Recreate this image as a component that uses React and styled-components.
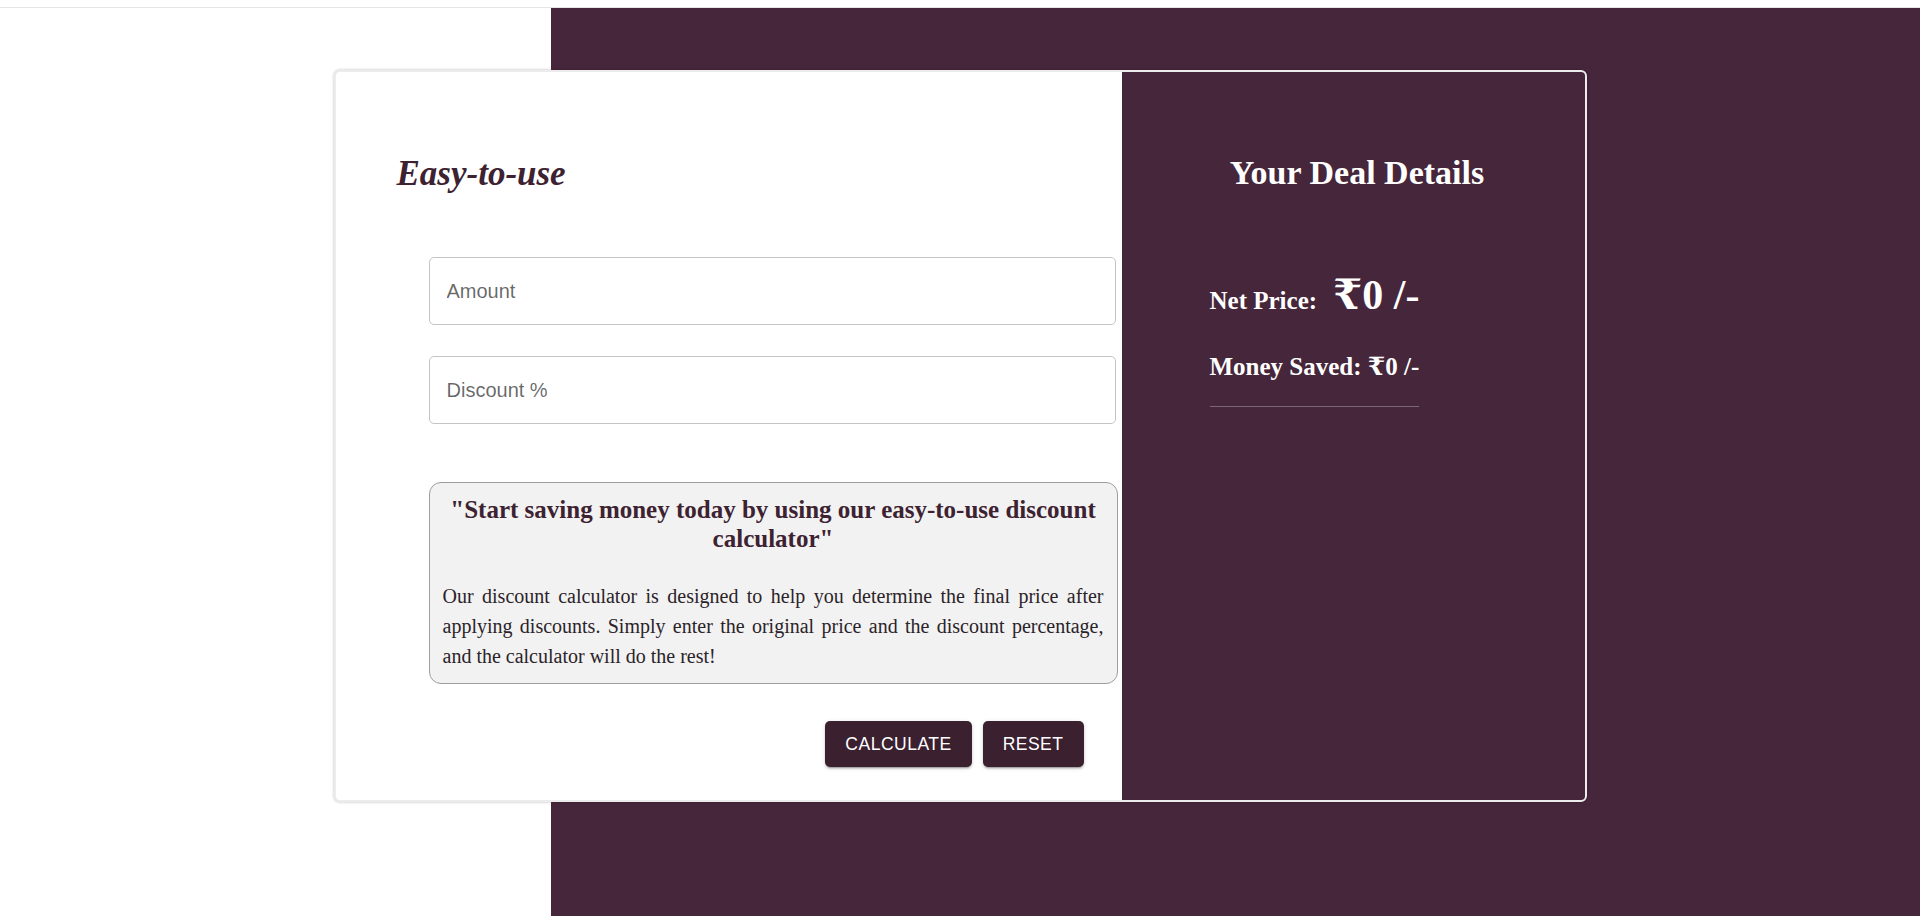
import React from "react";
import styled, { createGlobalStyle } from "styled-components";

const GlobalStyle = createGlobalStyle`
  html, body { margin: 0; padding: 0; }
  body {
    font-family: "Liberation Serif", "DejaVu Serif", serif;
    background: #ffffff;
  }
  * { box-sizing: border-box; }
`;

const PURPLE = "#46263a";
const DARK = "#3b2030";

const TopBar = styled.header`
  height: 8px;
  border-bottom: 1px solid #e4e4e4;
  background: #fff;
`;

const Stage = styled.main`
  min-height: calc(100vh - 8px);
  padding-top: 62px;
  background: linear-gradient(to right, #ffffff 0 551px, ${PURPLE} 551px 100%);
  display: flex;
  justify-content: center;
  align-items: flex-start;
`;

const Card = styled.section`
  width: 1253px;
  height: 732px;
  display: flex;
  background: #ffffff;
  border: 2px solid #ececec;
  border-radius: 6px;
  box-shadow: 0 0 3px rgba(0, 0, 0, 0.28);
  overflow: hidden;
`;

const FormPane = styled.div`
  width: 786px;
  padding: 83px 6px 0 61px;
  display: flex;
  flex-direction: column;
`;

const Title = styled.h2`
  margin: 0;
  font-size: ${(p) => p.$size || 34}px;
  font-weight: 700;
  font-style: ${(p) => (p.$italic ? "italic" : "normal")};
  color: ${(p) => (p.$light ? "#ffffff" : "#3d2231")};
  text-align: ${(p) => (p.$center ? "center" : "left")};
  line-height: 38px;
`;

const Form = styled.div`
  margin: 64px 0 0 32px;
  display: flex;
  flex-direction: column;
  gap: 31px;
`;

const Field = styled.input`
  display: block;
  width: 100%;
  height: 68px;
  padding: 0 17px;
  border: 1px solid #c4c4c4;
  border-radius: 5px;
  font-family: "Liberation Sans", Arial, sans-serif;
  font-size: 20px;
  color: #222;
  background: #fff;
  outline: none;
  &::placeholder {
    color: rgba(0, 0, 0, 0.6);
  }
`;

const QuoteBox = styled.div`
  margin: 58px 0 0 32px;
  width: 689px;
  padding: 0 13px 12px;
  border: 1px solid #9e9e9e;
  border-radius: 12px;
  background: #f2f2f2;
`;

const QuoteTitle = styled.h3`
  margin: 12px 0 0;
  font-size: 25px;
  line-height: 29px;
  font-weight: 700;
  text-align: center;
  color: #3d2231;
`;

const QuoteText = styled.p`
  margin: 28px 0 0;
  font-size: 20px;
  line-height: 30px;
  text-align: justify;
  color: #2b2329;
`;

const Actions = styled.div`
  margin: 37px 0 0 32px;
  padding-right: 32px;
  display: flex;
  justify-content: flex-end;
  gap: 11px;
`;

const Button = styled.button`
  height: 46px;
  padding: 0 20px;
  border: none;
  border-radius: 5px;
  background: ${DARK};
  color: #ffffff;
  font-family: "Liberation Sans", Arial, sans-serif;
  font-size: 17.5px;
  font-weight: 500;
  letter-spacing: 0.5px;
  text-transform: uppercase;
  cursor: pointer;
  box-shadow: 0px 3px 1px -2px rgba(0, 0, 0, 0.2),
    0px 2px 2px 0px rgba(0, 0, 0, 0.14), 0px 1px 5px 0px rgba(0, 0, 0, 0.12);
`;

const ResultPane = styled.aside`
  flex: 1;
  background: ${PURPLE};
  padding: 82px 0 0 8px;
  display: flex;
  flex-direction: column;
`;

const Details = styled.div`
  align-self: flex-start;
  margin: 82px 0 0 80px;
  padding-bottom: 27px;
  border-bottom: 1px solid rgba(255, 255, 255, 0.3);
  color: #ffffff;
  display: flex;
  flex-direction: column;
  gap: 38px;
`;

const Row = styled.div`
  display: flex;
  align-items: baseline;
  font-size: 25px;
  font-weight: 700;
  line-height: 1;
  white-space: pre;
`;

const BigValue = styled.span`
  font-size: 42px;
  line-height: 1;
  margin-left: 16px;
`;

export default function App() {
  return (
    <>
      <GlobalStyle />
      <TopBar />
      <Stage>
        <Card>
          <FormPane>
            <Title $italic $size={35}>
              Easy-to-use
            </Title>
            <Form>
              <Field type="number" placeholder="Amount" />
              <Field type="number" placeholder="Discount %" />
            </Form>
            <QuoteBox>
              <QuoteTitle>
                "Start saving money today by using our easy-to-use discount
                calculator"
              </QuoteTitle>
              <QuoteText>
                Our discount calculator is designed to help you determine the
                final price after applying discounts. Simply enter the original
                price and the discount percentage, and the calculator will do
                the rest!
              </QuoteText>
            </QuoteBox>
            <Actions>
              <Button>Calculate</Button>
              <Button>Reset</Button>
            </Actions>
          </FormPane>
          <ResultPane>
            <Title $light $center>
              Your Deal Details
            </Title>
            <Details>
              <Row>
                Net Price:<BigValue>₹0 /-</BigValue>
              </Row>
              <Row>Money Saved: ₹0 /-</Row>
            </Details>
          </ResultPane>
        </Card>
      </Stage>
    </>
  );
}
